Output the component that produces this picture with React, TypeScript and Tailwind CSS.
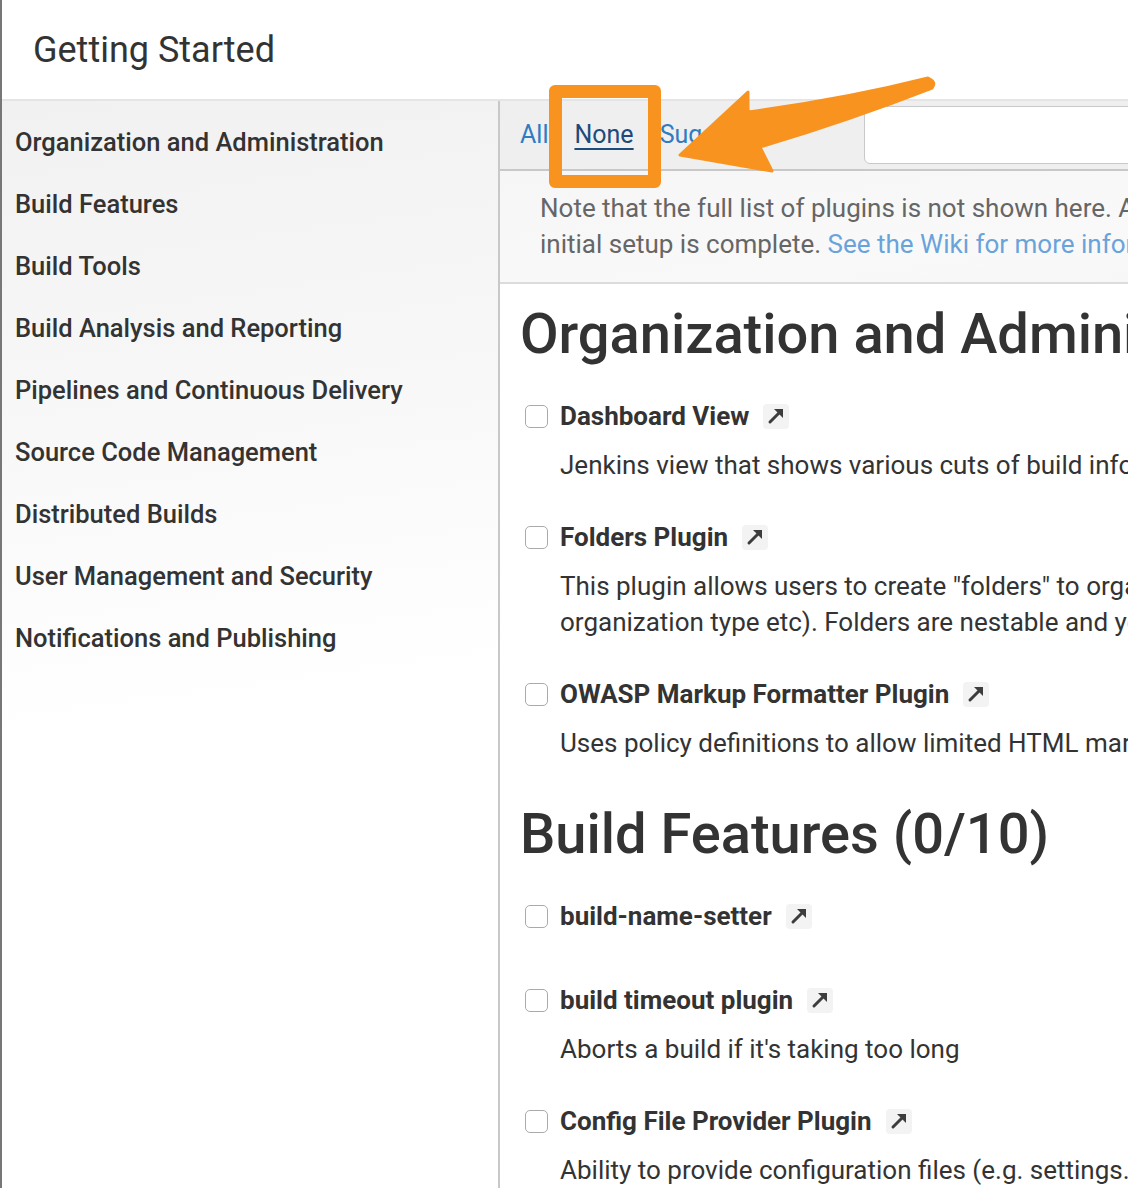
import React from "react";

type Plugin = {
  name: string;
  lines: string[];
  spacer?: boolean;
};

const categories = [
  "Organization and Administration",
  "Build Features",
  "Build Tools",
  "Build Analysis and Reporting",
  "Pipelines and Continuous Delivery",
  "Source Code Management",
  "Distributed Builds",
  "User Management and Security",
  "Notifications and Publishing",
];

const sections: { title: string; plugins: Plugin[] }[] = [
  {
    title: "Organization and Administration (0/3)",
    plugins: [
      {
        name: "Dashboard View",
        lines: ["Jenkins view that shows various cuts of build information via portlets."],
      },
      {
        name: "Folders Plugin",
        lines: [
          'This plugin allows users to create "folders" to organize jobs. Users can define custom taxonomies (like by project type,',
          "organization type etc). Folders are nestable and you can define views within folders.",
        ],
      },
      {
        name: "OWASP Markup Formatter Plugin",
        lines: ["Uses policy definitions to allow limited HTML markup in user-submitted text."],
      },
    ],
  },
  {
    title: "Build Features (0/10)",
    plugins: [
      { name: "build-name-setter", lines: [], spacer: true },
      { name: "build timeout plugin", lines: ["Aborts a build if it's taking too long"] },
      {
        name: "Config File Provider Plugin",
        lines: [
          "Ability to provide configuration files (e.g. settings.xml for maven, XML, groovy, custom files,...) loaded through the UI",
        ],
      },
    ],
  },
];

function ExternalIcon() {
  return (
    <span className="ml-[14px] inline-flex h-[25px] w-[26px] shrink-0 items-center justify-center rounded-[4px] bg-[#f3f3f3]">
      <svg width="26" height="25" viewBox="0 0 26 25">
        <line x1="7" y1="18" x2="16" y2="9" stroke="#3d3d3d" strokeWidth="3" strokeLinecap="round" />
        <polygon points="20,5 20,14 11,5" fill="#3d3d3d" />
      </svg>
    </span>
  );
}

function PluginRow({ plugin }: { plugin: Plugin }) {
  return (
    <div className={plugin.spacer ? "mb-[48px]" : "mb-[36px]"}>
      <div className="flex h-[36px] items-center pl-[5px]">
        <span className="h-[23px] w-[23px] shrink-0 rounded-[5px] border-[1.5px] border-[#aaa] bg-white" />
        <span className="ml-[12px] whitespace-nowrap text-[26px] font-bold leading-[36px] text-[#333]">
          {plugin.name}
        </span>
        <ExternalIcon />
      </div>
      {plugin.lines.length > 0 && (
        <div className="mt-[13px] pl-[40px] text-[26px] leading-[36px] text-[#333]">
          {plugin.lines.map((l, i) => (
            <div key={i} className="whitespace-nowrap">
              {l}
            </div>
          ))}
        </div>
      )}
    </div>
  );
}

export default function App() {
  return (
    <div className="relative h-[1188px] w-[1128px] overflow-hidden border-l-2 border-[#777] bg-white font-['Roboto',sans-serif]">
      {/* Header */}
      <div className="flex h-[101px] items-center border-b-2 border-[#e5e5e5] pl-[31px]">
        <h1 className="text-[36px] font-normal leading-none text-[#333]">Getting Started</h1>
      </div>

      <div className="flex h-[1087px]">
        {/* Sidebar */}
        <aside className="w-[498px] shrink-0 border-r-2 border-[#c8c8c8] bg-[linear-gradient(172deg,#f1f1f1_0%,#f8f8f8_30%,#ffffff_55%)] pt-[10px]">
          {categories.map((c) => (
            <div key={c} className="flex h-[62px] items-center pl-[13px] text-[25.5px] font-medium text-[#333]">
              {c}
            </div>
          ))}
        </aside>

        {/* Main */}
        <main className="w-[900px] shrink-0">
          <div className="flex h-[70px] items-center border-b-2 border-[#c8c8c8] bg-[#efefef] pl-[20px]">
            <div className="flex w-[344px] shrink-0 items-center gap-[26px] text-[25px] text-[#2f7cc0]">
              <span>All</span>
              <span className="text-[#1d4a7a] underline decoration-[2px] underline-offset-[5px]">None</span>
              <span>Suggested</span>
            </div>
            <div className="h-[58px] w-[400px] shrink-0 rounded-[6px] border-[1.5px] border-[#c9c9c9] bg-white" />
          </div>

          <div className="border-b-2 border-[#dcdcdc] bg-[linear-gradient(172deg,#f6f6f6_0%,#f9f9f9_60%,#f6f6f6_100%)] pb-[20px] pl-[40px] pt-[19px] text-[26px] leading-[36px] text-[#666]">
            <div className="whitespace-nowrap">
              Note that the full list of plugins is not shown here. Additional plugins can be installed in the
            </div>
            <div className="whitespace-nowrap">
              initial setup is complete. <span className="text-[#6aa3da]">See the Wiki for more information.</span>
            </div>
          </div>

          <div className="flex flex-col px-[20px] pt-[14px]">
            {sections.map((s, i) => (
              <section key={s.title}>
                <h2
                  className={`mb-[32px] whitespace-nowrap text-[56px] font-medium leading-[64px] text-[#333] ${
                    i === 0 ? "mt-[4px]" : "mt-[5px]"
                  }`}
                >
                  {s.title}
                </h2>
                {s.plugins.map((p) => (
                  <PluginRow key={p.name} plugin={p} />
                ))}
              </section>
            ))}
          </div>
        </main>
      </div>

      {/* Annotation overlay */}
      <div className="pointer-events-none absolute left-[547px] top-[85px] h-[103px] w-[112px] rounded-[6px] border-[13px] border-[#f8931f]" />
      <svg
        className="pointer-events-none absolute -left-[2px] top-0"
        width="1128"
        height="1188"
        viewBox="0 0 1128 1188"
      >
        <path
          d="M928,78 Q845,99 748,112 L748,92 L680,155 L772,171 L760,147 Q850,120 932,88 Q937,82 928,78 Z"
          fill="#f8931f"
          stroke="#f8931f"
          strokeWidth="3"
          strokeLinejoin="round"
        />
      </svg>
    </div>
  );
}
